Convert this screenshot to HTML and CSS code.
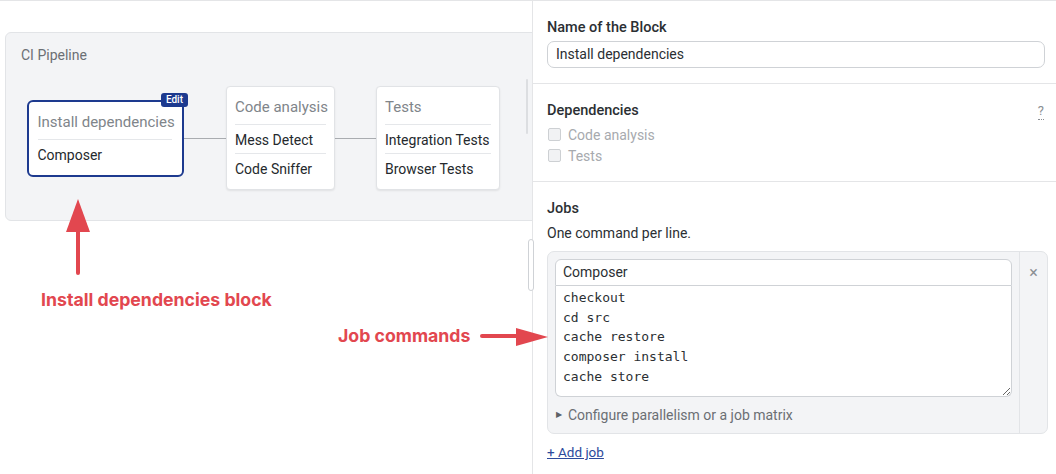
FILE: index.html
```html
<!DOCTYPE html>
<html>
<head>
<meta charset="utf-8">
<link rel="stylesheet" href="styles.css">
</head>
<body>
<div class="app">
  <div class="canvas-pane">
    <div class="pipeline">
      <div class="pipeline-title">CI Pipeline</div>
      <div class="blocks">
        <div class="block block-active">
          <span class="edit-badge">Edit</span>
          <div class="block-title">Install dependencies</div>
          <div class="block-job">Composer</div>
        </div>
        <div class="connector"></div>
        <div class="block block-code">
          <div class="block-title">Code analysis</div>
          <div class="block-job">Mess Detect</div>
          <div class="block-job">Code Sniffer</div>
        </div>
        <div class="connector"></div>
        <div class="block block-tests">
          <div class="block-title">Tests</div>
          <div class="block-job">Integration Tests</div>
          <div class="block-job">Browser Tests</div>
        </div>
      </div>
    </div>
    <div class="scroll-line"></div>
  </div>

  <aside class="panel">
    <section class="section">
      <div class="label">Name of the Block</div>
      <div class="text-input">Install dependencies</div>
    </section>
    <section class="section">
      <div class="label-row">
        <div class="label">Dependencies</div>
        <span class="help">?</span>
      </div>
      <div class="checks">
        <div class="check"><span class="box"></span>Code analysis</div>
        <div class="check"><span class="box"></span>Tests</div>
      </div>
    </section>
    <section class="section section-last">
      <div class="label">Jobs</div>
      <div class="desc">One command per line.</div>
      <div class="job-box">
        <div class="job-main">
          <div class="job-name">Composer</div>
          <textarea class="job-commands" spellcheck="false">checkout
cd src
cache restore
composer install
cache store</textarea>
          <div class="job-config"><span class="tri">&#9654;</span>Configure parallelism or a job matrix</div>
        </div>
        <div class="job-side"><span class="close">&#215;</span></div>
      </div>
      <a class="add-job" href="#">+ Add job</a>
    </section>
  </aside>

  <div class="divider-handle"></div>

  <svg class="arrows" width="1056" height="474" viewBox="0 0 1056 474">
    <line x1="78" y1="226" x2="78" y2="273" stroke="#e2474f" stroke-width="4" stroke-linecap="round"/>
    <polygon points="78,199 90,232 66,232" fill="#e2474f"/>
    <line x1="482" y1="336" x2="525" y2="336" stroke="#e2474f" stroke-width="4" stroke-linecap="round"/>
    <polygon points="548,337 516,328 516,346" fill="#e2474f"/>
  </svg>
  <div class="note note-block">Install dependencies block</div>
  <div class="note note-jobs">Job commands</div>
</div>
</body>
</html>
```

FILE: styles.css
```css
* { box-sizing: border-box; }
html, body { margin: 0; padding: 0; background: #fff; }
body {
  font-family: Roboto, "Liberation Sans", sans-serif;
  color: #2b2f33;
  font-size: 14px;
}
.app {
  position: relative;
  display: flex;
  width: 1056px;
  height: 474px;
  border-top: 1px solid #e4e5e7;
  overflow: hidden;
}
.canvas-pane {
  position: relative;
  width: 532px;
  flex: none;
  overflow: hidden;
}
.pipeline {
  margin: 31px 0 0 5px;
  width: 620px;
  height: 189px;
  background: #f3f4f6;
  border: 1px solid #e2e4e7;
  border-radius: 6px;
}
.pipeline-title {
  padding: 13px 0 0 15px;
  line-height: 18px;
  font-size: 14px;
  color: #6b6f74;
}
.blocks {
  display: flex;
  align-items: center;
  margin-top: 22px;
  padding-left: 21px;
}
.block {
  position: relative;
  background: #fff;
  border: 1px solid #e1e3e6;
  border-radius: 4px;
  box-shadow: 0 1px 2px rgba(0,0,0,0.08);
  padding: 10px 8px 7px 8px;
}
.block-active {
  width: 157px;
  border: 2.5px solid #1d3a8f;
  border-radius: 6px;
  padding: 10px 10px 7px 8.5px;
  box-shadow: none;
}
.block-code { width: 109px; }
.block-tests { width: 124px; }
.block-title {
  font-size: 15px;
  line-height: 20px;
  color: #80858a;
  padding-bottom: 7px;
  white-space: nowrap;
}
.block-job {
  border-top: 1px solid #e5e7ea;
  line-height: 20px;
  padding: 5px 0 3px 0;
  font-size: 14px;
  color: #25292d;
  white-space: nowrap;
}
.edit-badge {
  position: absolute;
  top: -9px;
  right: -6px;
  background: #1d3a8f;
  color: #fff;
  font-size: 10px;
  font-weight: 500;
  line-height: 14px;
  padding: 0 5px;
  border-radius: 3px;
}
.connector {
  width: 42px;
  height: 1px;
  background: #a9acb0;
}
.connector + .block-tests { margin-left: -1px; }
.scroll-line {
  position: absolute;
  left: 526px;
  top: 78px;
  width: 2px;
  height: 55px;
  background: #dcdee1;
  border-radius: 1px;
}
.panel {
  flex: 1;
  border-left: 1px solid #e4e5e7;
  display: flex;
  flex-direction: column;
}
.section {
  padding: 18px 11px 15px 14px;
  border-bottom: 1px solid #e4e5e7;
}
.section-last { border-bottom: none; padding-right: 8px; }
.label {
  font-weight: 500;
  font-size: 14.5px;
  line-height: 18px;
  color: #2b2f33;
}
.label-row {
  display: flex;
  justify-content: space-between;
  align-items: center;
}
.help {
  color: #8a8e93;
  font-size: 13px;
  line-height: 16px;
  border-bottom: 1px dotted #8a8e93;
  margin-right: 1px;
}
.text-input {
  margin-top: 4px;
  height: 27px;
  border: 1px solid #cfd2d6;
  border-radius: 7px;
  padding: 0 8px;
  line-height: 25px;
  font-size: 14px;
  color: #2b2f33;
}
.checks { margin-top: 4px; }
.check {
  display: flex;
  align-items: center;
  height: 21px;
  color: #a7aaae;
  font-size: 14px;
}
.box {
  width: 13px;
  height: 13px;
  border: 1px solid #cdd0d3;
  background: #f1f2f4;
  border-radius: 2px;
  margin: 0 7px 0 1px;
}
.desc {
  margin-top: 6px;
  line-height: 18px;
  font-size: 14px;
  color: #2b2f33;
}
.job-box {
  margin-top: 9px;
  display: flex;
  height: 183px;
  background: #f3f4f6;
  border: 1px solid #e2e4e7;
  border-radius: 7px;
}
.job-main {
  flex: 1;
  padding: 7px 7px 0 7px;
}
.job-name {
  height: 27px;
  background: #fff;
  border: 1px solid #cfd2d6;
  border-radius: 6px 6px 0 0;
  padding: 0 7px;
  line-height: 25px;
  font-size: 14px;
  color: #2b2f33;
}
.job-commands {
  display: block;
  width: 100%;
  height: 111px;
  margin: 0;
  background: #fff;
  border: 1px solid #cfd2d6;
  border-top: none;
  border-radius: 0 0 6px 6px;
  padding: 2px 7px;
  font-family: "DejaVu Sans Mono", "Liberation Mono", monospace;
  font-size: 13px;
  line-height: 19.7px;
  color: #2b2f33;
  resize: vertical;
  outline: none;
  overflow: hidden;
}
.job-config {
  padding: 8px 0 8px 1px;
  line-height: 20px;
  font-size: 14px;
  color: #6b6f74;
  display: flex;
  align-items: center;
}
.tri {
  font-size: 8px;
  margin-right: 6px;
  color: #5d6166;
}
.job-side {
  width: 28px;
  border-left: 1px solid #e2e4e7;
  display: flex;
  justify-content: center;
  padding-top: 12px;
}
.close {
  color: #8b8f94;
  font-size: 16px;
  line-height: 18px;
}
.add-job {
  display: inline-block;
  margin-top: 9px;
  color: #2c4a9c;
  font-size: 13.5px;
  line-height: 18px;
  text-decoration: underline;
  align-self: flex-start;
}
.divider-handle {
  position: absolute;
  left: 528px;
  top: 238px;
  width: 6px;
  height: 52px;
  background: #fff;
  border: 1px solid #cfd2d6;
  border-radius: 3px;
}
.arrows {
  position: absolute;
  left: 0;
  top: -1px;
  pointer-events: none;
}
.note {
  position: absolute;
  font-family: Inter, Roboto, sans-serif;
  color: #e2474f;
  font-weight: 700;
  font-size: 17.7px;
  line-height: 22px;
  white-space: nowrap;
}
.note-block { left: 41px; top: 288px; }
.note-jobs { left: 338px; top: 324px; }
```
